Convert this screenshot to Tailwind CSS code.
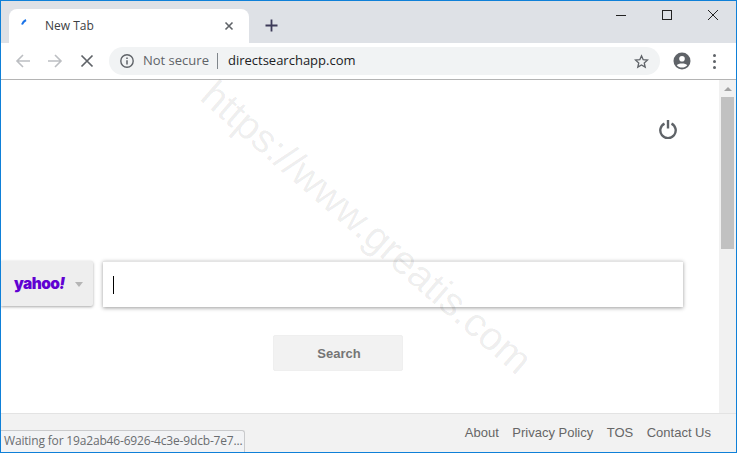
<!DOCTYPE html>
<html lang="en">
<head>
<meta charset="UTF-8">
<title>New Tab</title>
<script src="https://cdn.jsdelivr.net/npm/@tailwindcss/browser@4"></script>
</head>
<body class="w-[737px] h-[453px] overflow-hidden bg-white">
<div class="relative w-[737px] h-[453px] border border-[#0f80d8] flex flex-col overflow-hidden font-['Open_Sans',sans-serif]">

  <!-- tab strip -->
  <div class="h-[42px] shrink-0 bg-[#dee1e6] flex items-end pl-[8px]">
    <div class="w-[240px] h-[34px] bg-white rounded-t-[8px] flex items-center pl-[12px] pr-[12px]">
      <svg width="10" height="10" viewBox="0 0 10 10" class="mb-[6px]"><path d="M1 6.500Q2 3.500 5 2" stroke="#1a73e8" stroke-width="2" fill="none"/></svg>
      <span class="ml-[14px] text-[12px] text-[#3c4043]">New Tab</span>
      <svg width="10" height="10" viewBox="0 0 10 10" class="ml-auto mr-[3px]"><path d="M1.500 1.500L8.500 8.500M8.500 1.500L1.500 8.500" stroke="#5f6368" stroke-width="1.600"/></svg>
    </div>
    <div class="ml-[16px] mb-[11px] w-[13px] h-[13px]">
      <svg width="13" height="13" viewBox="0 0 13 13"><path d="M6.500 0.500V12.500M0.500 6.500H12.500" stroke="#3c3a58" stroke-width="1.800"/></svg>
    </div>
    <div class="ml-auto self-start flex items-center h-[28px]">
      <svg width="12" height="12" viewBox="0 0 12 12" class="mr-[34px]"><path d="M1 6.500H11" stroke="#222" stroke-width="1"/></svg>
      <svg width="12" height="12" viewBox="0 0 12 12" class="mr-[34px]"><rect x="1.500" y="1.500" width="9" height="9" fill="none" stroke="#222"/></svg>
      <svg width="12" height="12" viewBox="0 0 12 12" class="mr-[17px]"><path d="M1 1L11 11M11 1L1 11" stroke="#222"/></svg>
    </div>
  </div>

  <!-- toolbar -->
  <div class="h-[37px] shrink-0 bg-white border-b border-[#b4b4b4] flex items-center pl-[14px]">
    <svg width="16" height="14" viewBox="0 0 16 14"><path d="M15 7H2M8 1L2 7L8 13" stroke="#bcbec2" stroke-width="1.600" fill="none"/></svg>
    <svg width="16" height="14" viewBox="0 0 16 14" class="ml-[16px]"><path d="M1 7H14M8 1L14 7L8 13" stroke="#bcbec2" stroke-width="1.600" fill="none"/></svg>
    <svg width="14" height="14" viewBox="0 0 14 14" class="ml-[17px]"><path d="M1.500 1.500L12.500 12.500M12.500 1.500L1.500 12.500" stroke="#5f6368" stroke-width="1.700"/></svg>
    <div class="ml-[15px] w-[551px] h-[28px] bg-[#f1f3f4] rounded-full flex items-center pl-[11px] pr-[11px]">
      <svg width="14" height="14" viewBox="0 0 14 14"><circle cx="7" cy="7" r="6.200" fill="none" stroke="#5f6368" stroke-width="1.400"/><path d="M7 6.200V10.400M7 3.600V5" stroke="#5f6368" stroke-width="1.500"/></svg>
      <span class="ml-[9px] text-[13px] text-[#5f6368]">Not secure</span>
      <span class="ml-[8px] w-px h-[16px] bg-[#80868b]"></span>
      <span class="ml-[10px] text-[13px] text-[#202124]">directsearchapp.com</span>
      <svg width="15" height="15" viewBox="0 0 24 24" class="ml-auto"><path d="M12 3l2.700 6.200 6.800.6-5.100 4.500 1.500 6.700L12 17.500 6.100 21l1.500-6.700-5.100-4.500 6.800-.6z" fill="none" stroke="#5f6368" stroke-width="2.100"/></svg>
    </div>
    <svg width="18" height="18" viewBox="0 0 18 18" class="ml-[13px]"><circle cx="9" cy="9" r="8.500" fill="#5f6368"/><circle cx="9" cy="6.800" r="2.800" fill="#fff"/><path d="M3.800 13.200C5 10.800 13 10.800 14.200 13.200C13 14.800 11 15.500 9 15.500C7 15.500 5 14.800 3.800 13.200Z" fill="#fff"/></svg>
    <div class="ml-[22px] flex flex-col gap-[3px]">
      <span class="w-[3px] h-[3px] rounded-full bg-[#5f6368]"></span>
      <span class="w-[3px] h-[3px] rounded-full bg-[#5f6368]"></span>
      <span class="w-[3px] h-[3px] rounded-full bg-[#5f6368]"></span>
    </div>
  </div>

  <!-- page -->
  <div class="flex-1 flex min-h-0">
    <div class="flex-1 flex flex-col min-w-0">
      <div class="flex-1 min-h-0 bg-white">
        <div class="flex justify-end pr-[42px] pt-[39px] h-[181px]">
          <svg width="18" height="20" viewBox="0 0 18 20"><path d="M5.500 4.600A7.700 7.700 0 1 0 12.500 4.600" fill="none" stroke="#5f6368" stroke-width="2.400"/><path d="M9 1V9.500" stroke="#5f6368" stroke-width="2.400"/></svg>
        </div>
        <div class="flex h-[46px]">
          <div class="w-[92px] h-[45px] bg-[#eeeeee] rounded-r-[2px] shadow-[0_1px_3px_rgba(0,0,0,0.35)] flex items-center pl-[13px]">
            <span class="w-[53px] font-['Inter',sans-serif] font-black text-[15.500px] tracking-[-0.6px] text-[#6001d2] whitespace-nowrap">yahoo<span class="italic">!</span></span>
            <span class="ml-[8px] mt-[1px] w-0 h-0 border-x-[4.500px] border-x-transparent border-t-[5px] border-t-[#b5b5b5]"></span>
          </div>
          <div class="ml-[10px] w-[580px] h-[46px] bg-white border-t border-[#e4e4e4] shadow-[0_1px_4px_rgba(0,0,0,0.4)] flex items-center pl-[10px]">
            <span class="w-px h-[18px] bg-black"></span>
          </div>
        </div>
        <div class="mt-[28px] ml-[272px] w-[130px] h-[36px] bg-[#f2f2f2] rounded-[2px] border border-[#efefef] flex items-center justify-center pt-[1px] pl-[2px] font-['Liberation_Sans',sans-serif] font-bold text-[13px] text-[#757575]">Search</div>
      </div>
    </div>
    <!-- scrollbar -->
    <div class="w-[17px] shrink-0 bg-[#f1f1f1] flex flex-col items-center">
      <span class="mt-[7px] w-0 h-0 border-x-[4px] border-x-transparent border-b-[4px] border-b-[#a3a3a3]"></span>
      <span class="mt-[6px] w-[13px] h-[152px] bg-[#c1c1c1]"></span>
    </div>
  </div>

  <!-- footer -->
  <div class="absolute left-0 right-0 bottom-0 h-[39px] bg-[#f2f2f2] border-t border-[#e3e3e3] flex items-center justify-end gap-[13.500px] pr-[25px] font-['Liberation_Sans',sans-serif] text-[13px] text-[#666666]">
    <span>About</span><span>Privacy Policy</span><span>TOS</span><span>Contact Us</span>
  </div>

  <!-- status bubble -->
  <div class="absolute left-0 bottom-0 h-[22px] w-[244px] bg-[#f2f3f5] border-t border-r border-[#c9cacc] rounded-tr-[3px] pl-[3px] text-[12px] tracking-[-0.17px] leading-[20px] text-[#6a6d70] whitespace-nowrap">Waiting for 19a2ab46-6926-4c3e-9dcb-7e7...</div>

  <!-- watermark -->
  <div class="absolute left-[150px] top-[201px] w-[432px] text-center rotate-[41deg] font-['Liberation_Sans',sans-serif] text-[40px] leading-[50px] text-black/8 whitespace-nowrap pointer-events-none">https://www.greatis.com</div>
</div>
</body>
</html>
